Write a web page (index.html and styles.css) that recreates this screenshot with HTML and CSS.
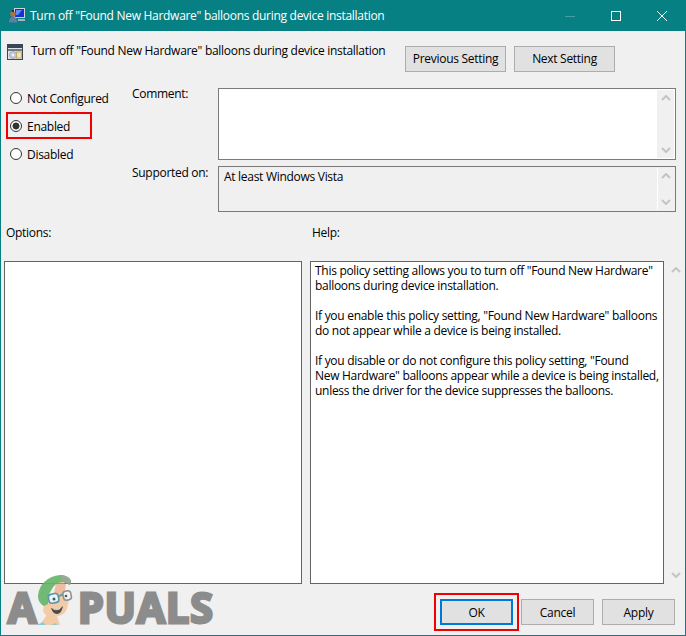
FILE: index.html
```html
<!DOCTYPE html>
<html lang="en">
<head>
<meta charset="utf-8">
<title>Policy setting</title>
<link rel="stylesheet" href="styles.css">
</head>
<body>
<div class="window">
  <header class="titlebar">
    <svg class="title-icon" viewBox="0 0 16 16" width="16" height="16">
      <rect x="5" y="0" width="11" height="10" fill="#c9d3dc"/>
      <rect x="6" y="1" width="9" height="8" fill="#1b2fd0"/>
      <path d="M7 2h6l-4 5H7z" fill="#5f8cf0"/>
      <rect x="9" y="11" width="7" height="2" fill="#a9b4bd"/>
      <circle cx="4" cy="6" r="2.8" fill="#a8743c"/>
      <path d="M0 14.500c0-4 2-6 4-6s4 2 4 6z" fill="#5d7fa8"/>
      <rect x="3" y="2" width="2" height="2" fill="#1c3150"/>
    </svg>
    <span class="title-text">Turn off "Found New Hardware" balloons during device installation</span>
    <div class="controls">
      <span class="control"><svg viewBox="0 0 10 10" width="10" height="10"><path d="M0 5.500h10" stroke="#43a1a3" fill="none"/></svg></span>
      <span class="control"><svg viewBox="0 0 10 10" width="10" height="10"><rect x=".5" y=".5" width="9" height="9" stroke="#fff" fill="none"/></svg></span>
      <span class="control"><svg viewBox="0 0 10 10" width="10" height="10"><path d="M0 0l10 10M10 0L0 10" stroke="#fff" fill="none"/></svg></span>
    </div>
  </header>

  <div class="head">
    <svg class="policy-icon" viewBox="0 0 16 16" width="16" height="16">
      <rect x=".5" y=".5" width="15" height="15" fill="#dfe3e2" stroke="#3c4650"/>
      <rect x="1" y="1" width="14" height="3" fill="#33475e"/>
      <rect x="1" y="5" width="14" height="2" fill="#6b7a8c"/>
      <circle cx="6" cy="11" r="3.5" fill="#cfc9de" stroke="#8d8aa0" stroke-width=".6"/>
      <circle cx="6" cy="11" r="1" fill="#fff"/>
      <rect x="9.500" y="8" width="5" height="6" fill="#f2e3a6" stroke="#a58f4c" stroke-width=".6"/>
    </svg>
    <span class="head-text">Turn off "Found New Hardware" balloons during device installation</span>
    <div class="nav">
      <button class="btn btn-nav" type="button">Previous Setting</button>
      <button class="btn btn-nav" type="button">Next Setting</button>
    </div>
  </div>

  <div class="settings">
    <div class="radios">
      <label class="radio"><span class="dot"></span>Not Configured</label>
      <label class="radio marked"><span class="dot checked"></span>Enabled</label>
      <label class="radio"><span class="dot"></span>Disabled</label>
    </div>
    <span class="field-label comment-label">Comment:</span>
    <div class="box box-comment">
      <div class="fill"></div>
      <div class="scroll">
        <svg class="chev" viewBox="0 0 10 6" width="10" height="6"><path d="M1 5l4-4 4 4" /></svg>
        <svg class="chev" viewBox="0 0 10 6" width="10" height="6"><path d="M1 1l4 4 4-4" /></svg>
      </div>
    </div>
    <span class="field-label">Supported on:</span>
    <div class="box box-support">
      <div class="fill">At least Windows Vista</div>
      <div class="scroll">
        <svg class="chev" viewBox="0 0 10 6" width="10" height="6"><path d="M1 5l4-4 4 4" /></svg>
        <svg class="chev" viewBox="0 0 10 6" width="10" height="6"><path d="M1 1l4 4 4-4" /></svg>
      </div>
    </div>
  </div>

  <div class="pane-labels">
    <span class="pane-label">Options:</span>
    <span class="pane-label">Help:</span>
  </div>

  <div class="panes">
    <div class="pane"></div>
    <div class="pane help">
      <p>This policy setting allows you to turn off "Found New Hardware"<br>balloons during device installation.</p>
      <p>If you enable this policy setting, "Found New Hardware" balloons<br>do not appear while a device is being installed.</p>
      <p>If you disable or do not configure this policy setting, "Found<br>New Hardware" balloons appear while a device is being installed,<br>unless the driver for the device suppresses the balloons.</p>
    </div>
    <div class="pane-scroll">
      <svg class="chev" viewBox="0 0 10 6" width="10" height="6"><path d="M1 5l4-4 4 4" /></svg>
      <svg class="chev" viewBox="0 0 10 6" width="10" height="6"><path d="M1 1l4 4 4-4" /></svg>
    </div>
  </div>

  <footer class="footer">
    <button class="btn btn-ok" type="button">OK</button>
    <button class="btn btn-foot" type="button">Cancel</button>
    <button class="btn btn-foot" type="button">Apply</button>
  </footer>

  <div class="watermark">
    <span class="wm-a">A</span>
    <svg class="mascot" viewBox="0 0 38 52" width="38" height="52">
      <path d="M9 24l-2 13 3 5-6 9h20l-3-9c6 0 10-4 11-12l3-13z" fill="#f3c9a0"/>
      <path d="M21 5l9 5-2 12-7-2-4 4z" fill="#ee9f72" opacity=".7"/>
      <path d="M2 22C3 10 12 2 24 1c6 0 11 3 11 7l-1 3-7-3c-5 0-9 3-11 7l-3 5-1 10-4 2C4 30 2 26 2 22z" fill="#64b568"/>
      <path d="M24 1c6 0 11 3 11 7l-1 3-7-3z" fill="#8f9f8c"/>
      <rect x="12.500" y="20" width="10" height="9" rx="3" fill="#eaf6f8" stroke="#4a8ea0" stroke-width="1.600" transform="rotate(-12 17 24)"/>
      <rect x="27" y="17" width="8" height="9" rx="3" fill="#f4f6f6" stroke="#8a8a8a" stroke-width="1.600" transform="rotate(-12 31 21)"/>
      <path d="M22 23l5-3" stroke="#4a8ea0" stroke-width="1.500"/>
      <circle cx="18" cy="25" r="1.500" fill="#2f4a55"/>
      <circle cx="30" cy="22" r="1.300" fill="#2f4a55"/>
      <path d="M15 34c4 2 8 2 12-2-1 5-3 8-6 8-3 0-5-3-6-6z" fill="#3d3a38"/>
      <path d="M17 35c3 1 6 0 8-2l-1 2c-2 1-5 2-7 0z" fill="#fff"/>
      <path d="M1 51l6-3 3 3zM15 51l5-2 1 2z" fill="#7cc6d8"/>
    </svg>
    <span class="wm-rest">PUALS</span>
  </div>
</div>
</body>
</html>
```

FILE: styles.css
```css
* { box-sizing: border-box; }

html, body { margin: 0; padding: 0; }

body {
  width: 686px;
  height: 636px;
  overflow: hidden;
  font-family: "Open Sans", "Noto Sans", "Liberation Sans", sans-serif;
  font-size: 12px;
  line-height: 15px;
  color: #000;
  letter-spacing: -0.29px;
}

.window {
  position: relative;
  display: flex;
  flex-direction: column;
  width: 686px;
  height: 636px;
  background: #f0f0f0;
  border: 1px solid #078083;
  border-top: 0;
}

/* title bar */
.titlebar {
  display: flex;
  align-items: center;
  height: 31px;
  margin: 0 -1px;
  padding-left: 9px;
  background: #078083;
  color: #fff;
  flex: none;
}
.title-icon { flex: none; margin-right: 5px; }
.title-text { white-space: nowrap; }
.controls { display: flex; margin-left: auto; margin-right: 1px; height: 31px; }
.control {
  display: flex;
  align-items: center;
  justify-content: center;
  width: 46px;
  height: 31px;
}
.control svg { display: block; }

/* heading row */
.head {
  display: flex;
  align-items: flex-start;
  height: 41px;
  padding: 15px 70px 0 6px;
  flex: none;
}
.policy-icon { flex: none; margin-top: -2px; }
.head-text { margin: -3px 0 0 8px; white-space: nowrap; }
.nav { display: flex; gap: 8px; margin-left: auto; }

.btn {
  display: block;
  height: 26px;
  padding: 0;
  background: #e1e1e1;
  border: 1px solid #adadad;
  border-radius: 0;
  font: inherit;
  letter-spacing: inherit;
  color: #000;
}
.btn-nav { width: 101px; padding-bottom: 2px; }
.btn-foot { width: 73px; }
.btn-ok {
  width: 73px;
  border: 2px solid #0078d7;
  outline: 2px solid #f00000;
  outline-offset: 4px;
}

/* setting state + comment + supported */
.settings {
  display: grid;
  grid-template-columns: 131px 86px 458px;
  grid-template-rows: 72px 46px;
  row-gap: 6px;
  margin-top: 16px;
  flex: none;
}
.radios {
  grid-row: 1 / span 2;
  margin: -4px 0 0 5px;
}
.radio {
  display: flex;
  align-items: center;
  gap: 5px;
  width: 86px;
  height: 28px;
  padding-left: 4px;
  white-space: nowrap;
}
.marked {
  height: 27px;
  margin-bottom: 1px;
  padding-top: 1px;
  outline: 2px solid #f00000;
  outline-offset: -2px;
}
.dot {
  flex: none;
  width: 12px;
  height: 12px;
  border: 1px solid #333;
  border-radius: 50%;
  background: #fff;
}
.checked {
  background: radial-gradient(circle, #333 0 3.2px, #fff 3.8px);
}
.field-label { margin-top: -1px; }
.comment-label { margin-top: -2px; }

.box {
  display: flex;
  border: 1px solid #7a7a7a;
  padding: 1px;
}
.box-comment { background: #fff; }
.box-support { background: #f0f0f0; }
.fill { flex: 1; padding: 1px 4px; }
.scroll {
  display: flex;
  flex-direction: column;
  justify-content: space-between;
  align-items: center;
  width: 17px;
  padding: 5px 0;
  background: #f0f0f0;
  border-left: 1px solid #fff;
}
.box-comment .scroll { border-left: 0; }
.chev { display: block; flex: none; }
.chev path { fill: none; stroke: #c4c4c4; stroke-width: 2; }

/* options + help */
.pane-labels {
  display: grid;
  grid-template-columns: 298px 354px;
  column-gap: 8px;
  margin-top: 13px;
  padding-left: 3px;
  flex: none;
}
.pane-label { padding-left: 2px; }

.panes {
  display: grid;
  grid-template-columns: 298px 354px 15px;
  column-gap: 8px;
  height: 323px;
  margin-top: 21px;
  padding-left: 3px;
  flex: none;
}
.pane {
  background: #fff;
  border: 1px solid #646464;
}
.help {
  padding: 1px 0 0 4px;
  white-space: nowrap;
}
.help p { margin: 0 0 15px; }
.pane-scroll {
  display: flex;
  flex-direction: column;
  justify-content: space-between;
  align-items: center;
  margin-left: -8px;
  padding: 6px 0;
}

/* bottom buttons */
.footer {
  display: flex;
  justify-content: flex-end;
  gap: 8px;
  margin-top: 15px;
  padding-right: 10px;
  flex: none;
}

/* logo watermark, drawn over the dialog */
.watermark {
  position: absolute;
  left: 7px;
  top: 574px;
  display: flex;
  align-items: flex-end;
  height: 52px;
  color: #8c8c8c;
  font-family: "Open Sans", sans-serif;
  font-weight: 700;
  font-size: 41px;
  line-height: 38px;
  letter-spacing: 0;
  -webkit-text-stroke: 3px #8c8c8c;
  pointer-events: none;
}
.wm-a { width: 28px; }
.mascot { flex: none; opacity: .9; }
.wm-rest { margin-left: 4px; letter-spacing: 1px; }
```
